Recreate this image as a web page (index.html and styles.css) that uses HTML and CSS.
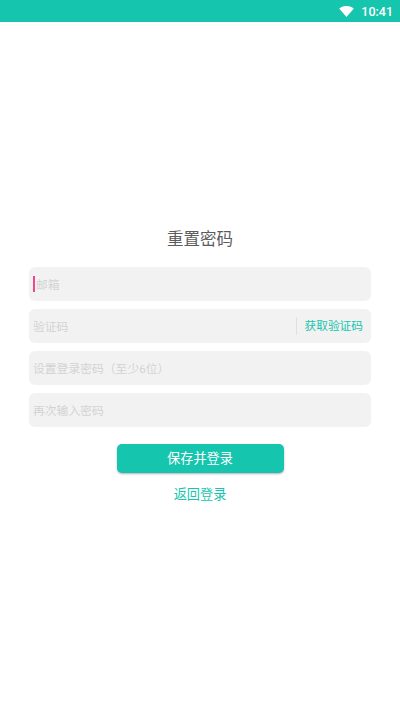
FILE: index.html
```html
<!DOCTYPE html>
<html lang="zh-CN">
<head>
    <meta charset="UTF-8">
    <meta name="viewport" content="width=device-width, initial-scale=1.0">
    <title>重置密码</title>
    <link rel="stylesheet" href="styles.css">
</head>
<body>
<div class="status-bar">
    <svg class="wifi" viewBox="0 0 16 12">
        <path d="M0 2.6 C4.6 -0.9 11.4 -0.9 16 2.6 L8 12 Z"/>
    </svg>
    <span class="time">10:41</span>
</div>
<div class="container">
    <h1 class="title">重置密码</h1>
    <div class="field">
        <span class="caret"></span>
        <span class="hint">邮箱</span>
    </div>
    <div class="field">
        <span class="hint">验证码</span>
        <span class="code-btn">获取验证码</span>
    </div>
    <div class="field">
        <span class="hint">设置登录密码（至少6位）</span>
    </div>
    <div class="field">
        <span class="hint">再次输入密码</span>
    </div>
    <button class="save">保存并登录</button>
    <a class="back">返回登录</a>
</div>
</body>
</html>
```
FILE: styles.css
```css
* {
    box-sizing: border-box;
}

body {
    margin: 0;
    height: 711px;
    background-color: #fff;
    font-family: "Roboto", "Noto Sans CJK SC", sans-serif;
    overflow: hidden;
}

.status-bar {
    height: 22px;
    background-color: #16c5ad;
    display: flex;
    justify-content: flex-end;
    align-items: center;
    padding-right: 7px;
    color: #fff;
}

.wifi {
    width: 15px;
    height: 11px;
    margin-right: 7px;
    fill: #fff;
}

.time {
    font-size: 12.5px;
    font-weight: 500;
}

.container {
    display: flex;
    flex-direction: column;
    align-items: center;
    padding: 0 29px;
}

.title {
    margin: 206px 0 15px;
    height: 24px;
    line-height: 24px;
    font-size: 16.5px;
    font-weight: 400;
    color: #5c5c5c;
}

.field {
    width: 100%;
    height: 34px;
    margin-bottom: 8px;
    padding: 0 0 2px 4px;
    display: flex;
    align-items: center;
    background-color: #f2f2f2;
    border-radius: 6px;
    font-size: 11.8px;
}

.caret {
    width: 2px;
    height: 16px;
    margin: 2px 1px 0 0;
    background-color: #f0468c;
}

.hint {
    color: #d2d2d2;
    flex: 1;
}

.code-btn {
    height: 18px;
    line-height: 18px;
    margin-top: 2px;
    padding: 0 8px;
    border-left: 1px solid #e0e0e0;
    color: #16c5ad;
    font-size: 11.7px;
}

.save {
    width: 167px;
    height: 29px;
    margin-top: 9px;
    padding: 0 0 3px;
    border: 0;
    border-radius: 5px;
    background-color: #16c5ad;
    box-shadow: 0 1px 2px rgba(120, 90, 120, 0.5);
    color: #fff;
    font-family: inherit;
    font-size: 13.2px;
}

.back {
    margin-top: 12px;
    height: 20px;
    line-height: 20px;
    color: #16c5ad;
    font-size: 13.2px;
}
```
